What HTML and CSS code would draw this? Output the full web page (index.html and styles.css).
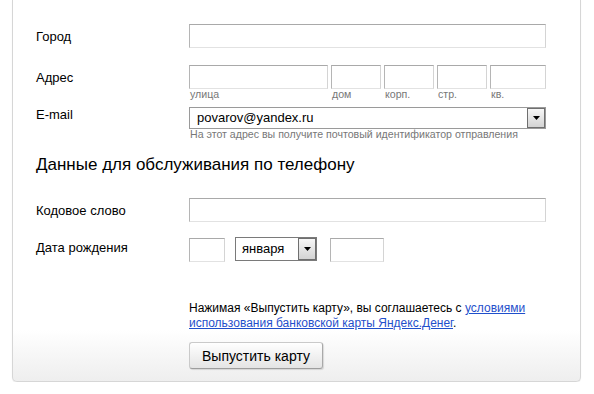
FILE: index.html
```html
<!DOCTYPE html>
<html lang="ru">
<head>
    <meta charset="UTF-8">
    <title>Выпуск карты</title>
    <link rel="stylesheet" href="styles.css">
</head>
<body>
    <div class="panel">
        <form class="form" onsubmit="return false">
            <div class="row">
                <label class="label">Город</label>
                <div class="field"><input class="input" type="text"></div>
            </div>
            <div class="row row-address">
                <label class="label">Адрес</label>
                <div class="field address">
                    <div class="part part-street"><input class="input" type="text"><span class="hint">улица</span></div>
                    <div class="part part-small"><input class="input" type="text"><span class="hint">дом</span></div>
                    <div class="part part-small"><input class="input" type="text"><span class="hint">корп.</span></div>
                    <div class="part part-small"><input class="input" type="text"><span class="hint">стр.</span></div>
                    <div class="part part-flat"><input class="input" type="text"><span class="hint">кв.</span></div>
                </div>
            </div>
            <div class="row row-email">
                <label class="label label-tight">E-mail</label>
                <div class="field">
                    <div class="select select-email">
                        <span class="select-value">povarov@yandex.ru</span>
                        <span class="select-button">
                            <svg width="7" height="4" viewBox="0 0 7 4"><polygon points="0,0 7,0 3.5,4" fill="#000"/></svg>
                        </span>
                    </div>
                    <span class="hint">На этот адрес вы получите почтовый идентификатор отправления</span>
                </div>
            </div>
            <h2 class="heading">Данные для обслуживания по телефону</h2>
            <div class="row row-code">
                <label class="label">Кодовое слово</label>
                <div class="field"><input class="input" type="text"></div>
            </div>
            <div class="row row-date">
                <label class="label label-date">Дата рождения</label>
                <div class="field date">
                    <input class="input input-day" type="text">
                    <div class="select select-month">
                        <span class="select-value">января</span>
                        <span class="select-button">
                            <svg width="7" height="4" viewBox="0 0 7 4"><polygon points="0,0 7,0 3.5,4" fill="#000"/></svg>
                        </span>
                    </div>
                    <input class="input input-year" type="text">
                </div>
            </div>
            <p class="terms">
                Нажимая «Выпустить карту», вы соглашаетесь с <a href="#">условиями использования банковской карты Яндекс.Денег</a>.
            </p>
            <div class="actions">
                <button class="submit" type="submit">Выпустить карту</button>
            </div>
        </form>
    </div>
</body>
</html>
```

FILE: styles.css
```css
body {
    margin: 0;
    background: #fff;
    font-family: "Liberation Sans", Arial, sans-serif;
    color: #000;
}
.panel {
    box-sizing: border-box;
    width: 569px;
    margin-left: 12px;
    padding: 24px 0 12px 23px;
    border: 1px solid #d6d6d6;
    border-top: none;
    border-radius: 0 0 5px 5px;
    background: linear-gradient(to bottom, #fff 0, #fff 330px, #eeeeee 100%);
    box-shadow: 0 1px 1px rgba(0, 0, 0, 0.08);
}
.row {
    display: flex;
}
.label {
    box-sizing: border-box;
    width: 153px;
    flex-shrink: 0;
    padding-top: 5px;
    font-size: 13px;
    line-height: 15px;
}
.label-tight {
    padding-top: 0;
}
.label-date {
    padding-top: 2px;
}
.field {
    width: 357px;
}
.input {
    display: block;
    box-sizing: border-box;
    width: 100%;
    height: 24px;
    margin: 0;
    padding: 0 4px;
    border: 1px solid;
    border-color: #a9a9a9 #d4d4d4 #e2e2e2 #b5b5b5;
    background: #fff;
    font: 13px "Liberation Sans", Arial, sans-serif;
    outline: none;
}
.hint {
    display: block;
    padding-left: 1px;
    font-size: 10.6px;
    line-height: 10px;
    color: #777;
}
.row-address {
    margin-top: 17px;
}
.address {
    display: flex;
    gap: 3px;
}
.part {
    display: flex;
    flex-direction: column;
}
.part-street {
    width: 139px;
}
.part-small {
    width: 50px;
}
.part-flat {
    width: 56px;
}
.row-email {
    margin-top: 8px;
}
.select {
    display: flex;
    box-sizing: border-box;
    border: 1px solid #9a9a9a;
    background: #fff;
}
.select-email {
    height: 22px;
}
.select-value {
    flex: 1;
    padding-left: 7px;
    font-size: 13px;
    line-height: 20px;
}
.select-button {
    display: flex;
    align-items: center;
    justify-content: center;
    width: 16px;
    border: 1px solid #6f6f6f;
    background: linear-gradient(to bottom, #f7f7f7, #d3d3d3);
}
.heading {
    margin: 16px 0 0;
    font-size: 17px;
    font-weight: normal;
    line-height: 20px;
}
.row-code {
    margin-top: 23px;
}
.row-date {
    margin-top: 16px;
}
.date {
    display: flex;
    align-items: flex-start;
}
.input-day {
    width: 36px;
}
.select-month {
    width: 82px;
    height: 24px;
    margin-top: -1px;
    margin-left: 10px;
    border-color: #7a7a7a;
}
.select-month .select-value {
    padding-left: 6px;
    line-height: 22px;
}
.input-year {
    width: 54px;
    margin-left: 13px;
}
.terms {
    margin: 39px 0 0;
    padding-left: 153px;
    width: 357px;
    font-size: 12px;
    line-height: 15px;
}
.terms a {
    color: #1f4fcb;
}
.actions {
    margin-top: 11px;
    padding-left: 153px;
}
.submit {
    box-sizing: border-box;
    width: 134px;
    height: 27px;
    padding: 0;
    border: 1px solid #cacaca;
    border-right-color: #a9a9a9;
    border-bottom-color: #9d9d9d;
    border-radius: 3px;
    background: linear-gradient(to bottom, #ffffff, #e4e4e4);
    box-shadow: 1px 1px 1px rgba(0, 0, 0, 0.12);
    font: 14px "Liberation Sans", Arial, sans-serif;
    color: #000;
}
```
